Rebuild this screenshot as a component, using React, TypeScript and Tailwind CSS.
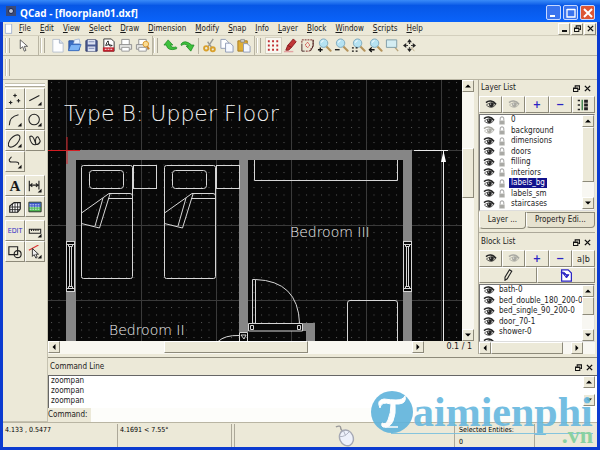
import { clsx } from "clsx";
import type { ReactNode } from "react";

const MENU = ["File", "Edit", "View", "Select", "Draw", "Dimension", "Modify", "Snap", "Info", "Layer", "Block", "Window", "Scripts", "Help"];

const LAYERS = ["0", "background", "dimensions", "doors", "filling", "interiors", "labels_bg", "labels_sm", "staircases", ""];

const BLOCKS = ["bath-0", "bed_double_180_200-0", "bed_single_90_200-0", "door_70-1", "shower-0", ""];

const RAISED = "border border-t-white border-l-white border-r-[#8d8a7a] border-b-[#8d8a7a]";

function Icon({ children, className = "size-[15px]" }: { children: ReactNode; className?: string }) {
  return (
    <svg viewBox="0 0 16 16" fill="none" stroke="#222" className={clsx("shrink-0", className)} aria-hidden="true">
      {children}
    </svg>
  );
}

function Eye({ off = false }: { off?: boolean }) {
  const color = off ? "#a9a9a2" : "#252525";
  return (
    <svg viewBox="0 0 12 9" className="w-3 h-[9px] shrink-0" fill="none" stroke={color} aria-hidden="true">
      <path d="M1 2.6C3.5.2 8 .2 11 4.2" strokeWidth="1.5" />
      <path d="M1.5 5C4 2.6 8 2.4 10.6 4.6 8.5 7.8 4.5 8.3 1.5 5Z" strokeWidth=".8" />
      <circle cx="6.4" cy="4.8" r="2.4" fill={color} stroke="none" />
      <circle cx="5.6" cy="4" r=".6" fill="#fff" stroke="none" />
    </svg>
  );
}

function Lock() {
  return (
    <svg viewBox="0 0 8 10" className="w-2 h-[9px] shrink-0" aria-hidden="true">
      <path d="M2 5V3a2 2 0 0 1 4 0v2" fill="none" stroke="#aaa" strokeWidth="1.2" />
      <path d="M1 5h6v4.5H1z" fill="#b5b5b0" />
      <path d="M2 6.5h4M2 8h4" stroke="#8d8d88" strokeWidth=".5" />
    </svg>
  );
}

function Zoom({ children }: { children?: ReactNode }) {
  return (
    <Icon>
      <path d="M10 9l4.5 4.5" stroke="#b5945c" strokeWidth="2.2" strokeLinecap="round" />
      <circle cx="7" cy="5.5" r="4.5" fill="#b5e2f2" stroke="#7fa9bd" />
      <path d="M4.5 5Q5 3 7 2.8" stroke="#fff" />
      <g stroke="#111" strokeWidth="1.4">{children}</g>
    </Icon>
  );
}

const FILE_ICONS = [
  {
    name: "New",
    icon: (
      <Icon>
        <path d="M3 1.5h7l4 4v9.500H3z" fill="#fdfeff" stroke="#b8c1ce" />
        <path d="M10 1.500v4h4" fill="#dbe4f0" stroke="#a8b3c4" />
      </Icon>
    ),
  },
  {
    name: "Open",
    icon: (
      <Icon>
        <path d="M2 13V3h5l1 2h5v8z" fill="#3d6fc4" stroke="#2a4f97" />
        <path d="M8 2l5-1 1 5H7z" fill="#e8f2ff" stroke="#87a3cf" strokeWidth=".6" />
        <path d="M1.500 13.500L4 7h11l-2.500 6.500z" fill="#7db4f5" stroke="#2f60b5" strokeWidth=".8" />
      </Icon>
    ),
  },
  {
    name: "Save",
    icon: (
      <Icon>
        <path d="M3 2h10l1 1v11H2V3z" fill="#4c5c94" stroke="#303b66" />
        <path d="M4 2h8v5H4zM4 9h8v5H4z" fill="#dce2f2" stroke="none" />
        <path d="M5 4h6M5 11h6" stroke="#7b88b5" />
      </Icon>
    ),
  },
  {
    name: "Export PDF",
    icon: (
      <Icon>
        <path d="M3 1h8l3 3v10H3z" fill="#fff" stroke="#333" />
        <path d="M5 8Q8 0 8 5T12 8Q8 6 5 8" stroke="#222" />
        <path d="M2 10h12v4.500H2z" fill="#c3202b" stroke="none" />
        <path d="M4 12h8" stroke="#fff" strokeDasharray="2 1" />
      </Icon>
    ),
  },
  {
    name: "Print",
    icon: (
      <Icon>
        <path d="M4 7V1.500h8V7" fill="#fff" stroke="#8d8d8d" />
        <path d="M1.500 7h13v5h-13z" fill="#e4e4e2" stroke="#909090" />
        <path d="M4 10h8v4H4z" fill="#fff" stroke="#999" />
      </Icon>
    ),
  },
  {
    name: "Print preview",
    icon: (
      <Icon>
        <path d="M4 7V1.500h8V7" fill="#fff" stroke="#8d8d8d" />
        <path d="M1.500 7h12v5h-12z" fill="#e4e4e2" stroke="#909090" />
        <path d="M4 10h8v4H4z" fill="#fff" stroke="#999" />
        <circle cx="11.500" cy="6.500" r="3" fill="#fbdc91" stroke="#d9962e" />
        <path d="M13 9l2 3" stroke="#c9812a" strokeWidth="2" />
      </Icon>
    ),
  },
];

const UNDO_ICONS = [
  {
    name: "Undo",
    icon: (
      <Icon>
        <path d="M5.500 2L1 7.500h2.500Q5 14.500 14.500 11.500 15 10 14 9.500 9 11 8 7.500h2.500z" fill="#3fc13c" stroke="#1d8a24" strokeWidth=".8" />
      </Icon>
    ),
  },
  {
    name: "Redo",
    icon: (
      <Icon>
        <path d="M1 6.500Q5 1 12.500 7.500H15L11.500 14 6.500 8.500H9Q5 5 1.500 8z" fill="#3fc13c" stroke="#1d8a24" strokeWidth=".8" />
      </Icon>
    ),
  },
];

const CLIP_ICONS = [
  {
    name: "Cut",
    icon: (
      <Icon>
        <path d="M12 1L6 10M6 4l5 7" stroke="#9a9a94" strokeWidth="1.500" />
        <circle cx="4.500" cy="11" r="2.300" stroke="#d9a02c" strokeWidth="2" />
        <circle cx="11.500" cy="12" r="2.200" stroke="#d9a02c" strokeWidth="2" />
      </Icon>
    ),
  },
  {
    name: "Copy",
    icon: (
      <Icon>
        <path d="M2 1.500h5l3 3V11H2z" fill="#fff" stroke="#8f9bb5" />
        <path d="M7 5.500h5l3 3V15H7z" fill="#f6f9ff" stroke="#8f9bb5" />
      </Icon>
    ),
  },
  {
    name: "Paste",
    icon: (
      <Icon>
        <path d="M2 3h10v11H2z" fill="#dfae37" stroke="#a77b21" />
        <path d="M5 1.500h4v3H5z" fill="#ccc" stroke="#777" strokeWidth=".6" />
        <path d="M8 6h4l3 3v6H8z" fill="#f6f9ff" stroke="#8f9bb5" />
      </Icon>
    ),
  },
];

const VIEW_ICONS = [
  {
    name: "Grid",
    icon: (
      <Icon>
        <path d="M2 3.500h12M2 8h12M2 12.500h12" stroke="#c02a2f" strokeWidth="2" strokeDasharray="2 2.500" />
      </Icon>
    ),
  },
  {
    name: "Draft mode",
    icon: (
      <Icon>
        <path d="M11 1l3 3-5 6-4-2z" fill="#c03636" stroke="#8c1b20" />
        <path d="M5 8l4 2-3 3H3z" fill="#b33" stroke="#8c1b20" />
        <path d="M1 14.500h10" stroke="#e3a3a3" strokeWidth="1.500" />
      </Icon>
    ),
  },
  {
    name: "Redraw",
    icon: (
      <Icon>
        <path d="M2 5V2h12v6l-4 6H6" stroke="#722" strokeDasharray="2 1" />
        <path d="M2 6v8h3M14 2v7l-3 5" stroke="#422" />
        <path d="M8 4.500l2.500 3L8 10.500 5.500 7.500z" stroke="#c33" strokeDasharray="2 1" />
      </Icon>
    ),
  },
  { name: "Zoom in", icon: <Zoom><path d="M1 12.500h5M3.500 10v5" /></Zoom> },
  { name: "Zoom out", icon: <Zoom><path d="M1 12.500h5" /></Zoom> },
  { name: "Auto zoom", icon: <Zoom><path d="M1 10.500h6M1 14h6" strokeDasharray="2 2" /></Zoom> },
  { name: "Previous view", icon: <Zoom><path d="M2 12.500h5M4 10l-2.500 2.500L4 15" /></Zoom> },
  {
    name: "Window zoom",
    icon: (
      <Icon>
        <path d="M9 8l5 6" stroke="#b9a67d" strokeWidth="1.500" />
        <path d="M1.500 2h11v8h-11z" fill="#d4edf2" stroke="#7e9ca6" />
      </Icon>
    ),
  },
  {
    name: "Pan",
    icon: (
      <Icon className="size-[13px]">
        <path d="M8 0l3 4H5zM8 16l3-4H5zM0 8l4-3v6zM16 8l-4-3v6z" fill="#222" stroke="none" />
        <path d="M8 4v2M8 10v2M4 8h2M10 8h2" strokeWidth="1.500" />
        <path d="M10 10l4 5" stroke="#b9a67d" />
      </Icon>
    ),
  },
];

const CORNER = <path d="M11 15.500h4.500V11z" fill="#111" stroke="none" />;

const TOOLS = [
  [
    { name: "Point", icon: <path d="M8 2v4M6 4h4M3 10v4M1 12h4M12 8v4M10 10h4" strokeWidth="1.300" /> },
    { name: "Line", icon: <><path d="M1.500 10L13 4" strokeWidth="1.200" />{CORNER}</> },
    { name: "Arc", icon: <><path d="M1.500 14Q1.500 4 12 2" strokeWidth="1.200" />{CORNER}</> },
    { name: "Circle", icon: <><circle cx="7" cy="7.500" r="6" strokeWidth="1.200" />{CORNER}</> },
    { name: "Ellipse", icon: <><ellipse cx="7" cy="8" rx="8.500" ry="4.500" transform="rotate(-48 7 8)" strokeWidth="1.200" />{CORNER}</> },
    { name: "Spline", icon: <path d="M2 3Q5 1 7 6T9 12Q6 13 4 10T2 3zM9 12Q8 8 9 5 11 2 12 4T14 8Q13 12 9 12z" strokeWidth="1.200" /> },
    { name: "Polyline", icon: <><path d="M4 2L1.500 5Q1 8 4 8H9Q13 8 12 11" strokeWidth="1.200" />{CORNER}</> },
  ],
  [
    { name: "Text", icon: null },
    { name: "Dimension", icon: <><path d="M1.500 2v12M12.500 2v10M2 7h10M5 5L2.500 7 5 9M9 5l2.500 2L9 9" strokeWidth="1.300" />{CORNER}</> },
    {
      name: "Hatch",
      icon: (
        <>
          <path d="M2 14V7L7 3h7v7l-3 4z" strokeWidth="1.400" fill="#fff" />
          <path d="M2 8h12M2 11h12M5 4v10M8 3v11M11 3v11" />
        </>
      ),
    },
    {
      name: "Image",
      icon: (
        <>
          <path d="M1 2.500h14v11H1z" fill="#4fb852" />
          <path d="M1.500 3h13v5h-13z" fill="#3f55c8" stroke="none" />
          <path d="M2 5.500h12M2 8h12M2 10.500h12" stroke="#e8f4ff" strokeDasharray="2 1" />
        </>
      ),
    },
  ],
  [
    { name: "Edit", icon: null },
    { name: "Measure", icon: <><path d="M1.500 6h13v4.500h-13zM4 6v2M6.500 6v2M9 6v2M11.500 6v2" strokeWidth="1.200" />{CORNER}</> },
    { name: "Block", icon: <><path d="M1 2h10v9H1z" strokeWidth="1.300" /><circle cx="11" cy="10.500" r="4" strokeWidth="1.300" /></> },
    {
      name: "Select",
      icon: (
        <>
          <path d="M1 6L12 0" stroke="#d33" strokeWidth="1.300" />
          <path d="M5 4v9l2-2 2 4 1.500-1L9 10.500h3z" fill="#eee" />
          {CORNER}
        </>
      ),
    },
  ],
];

function Handle() {
  return <div className="w-1 self-stretch my-[2px] mr-1 border-x border-l-white border-r-[#aca899] shadow-[-1px_0_0_#c5c2b0]" />;
}

function ToolGroup({ items }: { items: { name: string; icon: ReactNode }[] }) {
  return (
    <div className="flex items-center">
      {items.map((e) => (
        <button key={e.name} aria-label={e.name} className={clsx("w-[17px] h-[17px] flex items-center justify-center", e.name === "Grid" && "bg-[#f8f7f1] border border-[#d5d1c0]")}>
          {e.icon}
        </button>
      ))}
    </div>
  );
}

function Arrow({ dir }: { dir: "up" | "down" | "left" | "right" }) {
  return (
    <button aria-label={`Scroll ${dir}`} className={clsx("size-3 shrink-0 bg-[#ece9d8] flex items-center justify-center", RAISED)}>
      <svg viewBox="0 0 6 6" className="size-[6px]" aria-hidden="true">
        {dir === "up" && <path d="M0 4.500h6L3 1.500z" />}
        {dir === "down" && <path d="M0 1.500h6L3 4.500z" />}
        {dir === "left" && <path d="M4.500 0v6l-3-3z" />}
        {dir === "right" && <path d="M1.500 0v6l3-3z" />}
      </svg>
    </button>
  );
}

function DockTitle({ title }: { title: string }) {
  return (
    <header className="h-4 shrink-0 flex items-center justify-between pl-[2px] pr-1">
      <h2>{title}</h2>
      <div className="flex gap-1">
        <button aria-label={`Float ${title}`}>
          <RestoreIcon />
        </button>
        <button aria-label={`Close ${title}`}>
          <CloseIcon />
        </button>
      </div>
    </header>
  );
}

function RestoreIcon() {
  return (
    <svg viewBox="0 0 8 8" className="size-[7px]" fill="none" stroke="#111" aria-hidden="true">
      <path d="M2.500 3V1h5v4H6M2.500 1h5" strokeWidth="1.200" />
      <path d="M.5 3.500h5v4h-5zM.5 4h5" strokeWidth="1.200" />
    </svg>
  );
}

function CloseIcon() {
  return (
    <svg viewBox="0 0 8 8" className="size-[7px]" stroke="#111" strokeWidth="1.600" aria-hidden="true">
      <path d="M1 1l6 6M7 1L1 7" />
    </svg>
  );
}

function Bed({ x }: { x: number }) {
  return (
    <g transform={`translate(${x} 85)`}>
      <rect x=".5" y=".5" width="51" height="113" rx="2" />
      <rect x="8.500" y="5.500" width="34" height="18" rx="3" />
      <rect x="52.500" y=".5" width="23" height="23" />
      <path d="M.5 48L28 28.500H49Q51.500 28.500 51.500 31M27 33.500h24.500M.5 58.500L18.500 63 29 29M22 33L14 61" />
    </g>
  );
}

function WallWindow({ x, y }: { x: number; y: number }) {
  return (
    <g transform={`translate(${x} ${y})`}>
      <path d="M0 0h9v51H0z" fill="#080808" stroke="none" />
      <path d="M.5 0v51M8.500 0v51M0 .5h9M0 3.500h9M0 47.500h9M0 50.500h9M3.500 5v41M5.500 5v41M2.500 3.500v2h4v-2M2.500 47.500v-2h4v2" />
    </g>
  );
}

function Drawing() {
  return (
    <svg className="flex-1 min-w-0 h-auto min-h-[200px] bg-[#080808] font-['DejaVu_Sans'] font-extralight" fill="none" role="img" aria-label="Floor plan">
      <defs>
        <pattern id="dots" x="3" y="2" width="7.500" height="7.500" patternUnits="userSpaceOnUse">
          <rect width="1" height="1" fill="#555" />
        </pattern>
        <pattern id="lines" x="18" y="70" width="75" height="75" patternUnits="userSpaceOnUse">
          <path d="M.5 0v75M0 .5h75" stroke="#3a3a3a" />
        </pattern>
      </defs>
      <rect width="100%" height="100%" fill="url(#dots)" />
      <rect width="100%" height="100%" fill="url(#lines)" />
      <path d="M18 70h346v400h-9V80H200v172h-9V80H28v390H18zM255 243h12v227h-9V251h-3z" fill="#868686" />
      <g stroke="#d6d6d6">
        <Bed x={33} />
        <Bed x={116} />
        <WallWindow x={18} y={161} />
        <WallWindow x={355} y={161} />
        <path d="M206.500 80v20.500h143V80" />
        <path d="M204.500 243V199.500h3V243M207.500 199.500Q250 201 251.500 243" />
        <path d="M200.500 243.500h54v7.500h-54zM202.500 245.500h3v4h-3zM249.500 245.500h3v4h-3z" fill="#080808" />
        <path d="M299.500 400V223q0-2.500 2.500-2.500h45q2.500 0 2.500 2.500V400" />
        <path d="M170 261.500Q177 255 191 255.500M191.500 252.500h8v30h-8zM193 255l5 0-2 4z" />
        <path d="M366 70.500h34M395.500 71v400" stroke="#e9e9e9" />
      </g>
      <path d="M395.500 71l2.500 11h-5z" fill="#fff" />
      <path d="M0 70.500h32M19 57v27" stroke="#d41c22" />
      <g fill="#f2f2f2">
        <text x="16" y="41" fontSize="22">Type B: Upper Floor</text>
        <text x="61" y="255" fontSize="14">Bedroom II</text>
        <text x="242" y="157" fontSize="14">Bedroom III</text>
      </g>
    </svg>
  );
}

function LayerList() {
  return (
    <section className="flex flex-col">
      <DockTitle title="Layer List" />
      <div className="grid grid-cols-5 h-[17px] mb-px">
        {[<Eye />, <Eye off />, "+", "−", null].map((e, i) => (
          <button key={i} aria-label={["Show all", "Hide all", "Add layer", "Remove layer", "Edit layer"][i]} className={clsx("flex items-center justify-center text-[11px] font-bold text-[#2b25c4]", RAISED)}>
            {e ?? (
              <Icon className="size-3">
                <path d="M1 2h3M1 8h3M1 14h3" strokeWidth="2" />
                <path d="M7 1v14" stroke="#4a8a55" strokeWidth="2" />
                <path d="M12 1v14" strokeWidth="5" strokeDasharray="4 1" />
              </Icon>
            )}
          </button>
        ))}
      </div>
      <div className="flex h-[97px] overflow-hidden bg-white border border-t-[#777] border-l-[#777] border-[#ddd]">
        <ul className="grid auto-rows-fr h-[105px] flex-1 min-w-0 pl-[3px]">
          {LAYERS.map((e) => (
            <li key={e} className="flex items-center gap-[3px] leading-[10px]">
              <Eye off={e === "background"} />
              <Lock />
              <span className={clsx("px-[2px]", e === "labels_bg" && "bg-[#12128c] text-white")}>{e}</span>
            </li>
          ))}
        </ul>
        <div className="flex flex-col justify-between bg-[#f8f7f2] pb-px">
          <Arrow dir="up" />
          <div className={clsx("h-[55px] bg-[#ece9d8] mb-auto", RAISED)} />
          <Arrow dir="down" />
        </div>
      </div>
      <div className="flex items-start pt-px">
        <button className="h-[17px] flex-2 whitespace-nowrap border border-t-0 border-l-white border-[#8d8a7a] rounded-b-sm">Layer ...</button>
        <button className="h-4 flex-3 whitespace-nowrap border border-[#8d8a7a] border-l-white bg-[#e6e2cf] rounded-b-sm">Property Edi...</button>
      </div>
    </section>
  );
}

function BlockList() {
  return (
    <section className="flex flex-col flex-1 border-t border-[#aca899] mt-[3px] pt-px">
      <DockTitle title="Block List" />
      <div className="grid grid-cols-5 h-[17px]">
        {[<Eye />, <Eye off />, "+", "−", "a|b"].map((e, i) => (
          <button key={i} aria-label={["Show blocks", "Hide blocks", "Add block", "Remove block", "Rename block"][i]} className={clsx("flex items-center justify-center", RAISED, i < 4 ? "text-[11px] font-bold text-[#2b25c4]" : "text-[9px]")}>
            {e}
          </button>
        ))}
      </div>
      <div className="grid grid-cols-2 h-4 mb-px">
        <button aria-label="Edit block" className={clsx("flex items-center justify-center", RAISED)}>
          <Icon className="size-3">
            <path d="M10 1l3 2-6 10-3 2V11z" strokeWidth="1.500" />
          </Icon>
        </button>
        <button aria-label="Insert block" className={clsx("flex items-center justify-center", RAISED)}>
          <Icon className="size-[13px]">
            <path d="M2 1h8l4 4v10H2z" fill="#fff" stroke="#2b25c4" strokeWidth="1.500" />
            <path d="M1 4q7-1 7 6M5 7l3 4 3-4z" fill="#2b25c4" stroke="#2b25c4" strokeWidth="1.200" />
          </Icon>
        </button>
      </div>
      <div className="flex h-[58px] overflow-hidden bg-white border border-t-[#777] border-l-[#777] border-[#ddd]">
        <ul className="grid auto-rows-fr h-[63px] flex-1 min-w-0 pl-[3px]">
          {BLOCKS.map((e) => (
            <li key={e} className="flex items-center gap-1 leading-[10px] overflow-hidden whitespace-nowrap">
              <Eye />
              <span>{e}</span>
            </li>
          ))}
        </ul>
        <div className="flex flex-col justify-between bg-[#f8f7f2]">
          <Arrow dir="up" />
          <div className={clsx("h-[18px] bg-[#ece9d8] mb-auto", RAISED)} />
          <Arrow dir="down" />
        </div>
      </div>
      <div className="flex bg-[#f8f7f2] pr-3">
        <Arrow dir="left" />
        <div className={clsx("w-[72px] mr-auto bg-[#ece9d8]", RAISED)} />
        <Arrow dir="right" />
      </div>
    </section>
  );
}

function CommandLine() {
  return (
    <section className="flex flex-col border-t border-[#8d8a7a] pt-px">
      <DockTitle title="Command Line" />
      <div className="flex h-[33px] bg-white border-t border-l border-[#666] pr-[2px]">
        <div className="flex-1 flex flex-col justify-end leading-[10px] pl-[2px] pb-[2px] overflow-hidden">
          <p>zoompan</p>
          <p>zoompan</p>
          <p>zoompan</p>
        </div>
        <div className="flex flex-col justify-between pb-[2px]">
          <Arrow dir="up" />
          <Arrow dir="down" />
        </div>
      </div>
      <label className="flex items-center h-[14px]">
        <span className="w-[43px]">Command:</span>
        <input className="flex-1 min-w-0 h-full bg-[#fdfdfa] outline-none" />
      </label>
    </section>
  );
}

function Watermark() {
  return (
    <div className="absolute right-1 bottom-0 w-[222px] h-[56px] pointer-events-none font-['Liberation_Serif'] opacity-90">
      <div className="flex items-start">
        <svg viewBox="0 0 42 42" className="size-[42px] shrink-0" aria-hidden="true">
          <circle cx="21" cy="21" r="21" fill="#5fb3dc" />
          <path d="M9 17Q5 9 13 8Q20 9 25 9Q32 9 34 5Q36 12 28 13L24 13Q25 23 22 30Q19 37 12 36Q10 35 11 32Q15 34 17 29Q20 22 20 13Q10 10 9 17z" fill="#fff" stroke="#fff" strokeLinejoin="round" />
          <path d="M14 36h13" stroke="#fff" strokeWidth="1.500" />
        </svg>
        <span className="text-[42px] leading-[42px] font-bold text-[#66b8df]">aimienphi</span>
      </div>
      <div className="absolute left-5 right-0 top-[42px] border-t border-[#7ac0de]" />
      <span className="absolute right-0 top-[32px] text-[24px] leading-6 font-bold text-[#80cf9c]">.vn</span>
    </div>
  );
}

export default function App() {
  return (
    <div className="relative min-h-screen flex flex-col bg-[#ece9d8] border-x-3 border-b-3 border-[#0b3bd0] text-[8px] leading-[10px] text-[#1a1a1a] font-['DejaVu_Sans_Condensed','DejaVu_Sans',sans-serif]">
      <header className="-mx-[3px] h-[22px] flex items-center gap-1 pl-[6px] pr-[5px] bg-linear-to-b from-[#3a8bf8] via-[#0757e6] via-25% to-[#0a63fa] text-white">
        <svg viewBox="0 0 10 10" className="size-[10px]" aria-hidden="true">
          <path d="M0 0h10v10H0z" fill="#3b4a78" />
          <circle cx="5" cy="5" r="2.500" fill="#b9c3da" stroke="#18224a" />
        </svg>
        <h1 className="text-[10px] font-['Open_Sans',sans-serif] font-bold flex-1 pt-[3px]">QCad - [floorplan01.dxf]</h1>
        <div className="flex gap-[2px] pt-[3px]">
          {["Minimize", "Maximize", "Close"].map((e) => (
            <button key={e} aria-label={e} className={clsx("size-[15px] rounded-[2px] border border-[#c9d9ff] flex items-center justify-center", e === "Close" ? "bg-[#dd5634]" : "bg-[#3a74ee]")}>
              <svg viewBox="0 0 10 10" className="size-[10px]" fill="none" stroke="#fff" strokeWidth="2" aria-hidden="true">
                {e === "Minimize" && <path d="M1 8h5" />}
                {e === "Maximize" && <path d="M1 1.500h8M1 1v8h8V1" strokeWidth="1.300" />}
                {e === "Close" && <path d="M1 1l8 8M9 1L1 9" />}
              </svg>
            </button>
          ))}
        </div>
      </header>

      <nav className="h-[14px] flex items-center gap-px border-b border-[#d3cfbd]">
        <Icon className="w-[11px] h-[10px]">
          <path d="M3 0h10v15H3z" fill="#fff" stroke="#7d97c5" />
        </Icon>
        {MENU.map((e) => (
          <button key={e} className="px-1">
            <span className="underline">{e[0]}</span>
            {e.slice(1)}
          </button>
        ))}
        <div className="ml-auto flex h-3 gap-px pr-px">
          <button aria-label="Minimize drawing" className={clsx("w-3 flex items-end justify-center pb-[2px]", RAISED)}>
            <span className="w-[5px] h-[2px] bg-[#111]" />
          </button>
          <button aria-label="Restore drawing" className={clsx("w-3 flex items-center justify-center", RAISED)}>
            <RestoreIcon />
          </button>
          <button aria-label="Close drawing" className={clsx("w-3 flex items-center justify-center", RAISED)}>
            <CloseIcon />
          </button>
        </div>
      </nav>

      <div className="h-5 flex items-center pl-[3px] border-b border-[#b9b5a3]">
        <Handle />
        <button aria-label="Pointer" className="w-[22px] flex">
          <Icon className="size-[13px] ml-[3px]">
            <path d="M4 1v11l3-2.500L9 15l2-1-2-5h4z" fill="#fff" stroke="#444" />
          </Icon>
        </button>
        <div className="w-px self-stretch bg-[#b9b5a3] mx-[2px]" />
        <Handle />
        <ToolGroup items={FILE_ICONS} />
        <div className="w-px self-stretch bg-[#b9b5a3] mx-px" />
        <Handle />
        <ToolGroup items={UNDO_ICONS} />
        <div className="w-px h-4 bg-[#b9b5a3] mx-[2px]" />
        <ToolGroup items={CLIP_ICONS} />
        <div className="w-px self-stretch bg-[#b9b5a3] mx-[2px]" />
        <Handle />
        <ToolGroup items={VIEW_ICONS} />
      </div>
      <div className="h-6 flex pl-[3px] py-px border-b border-[#b9b5a3]">
        <Handle />
      </div>

      <div className="flex flex-1">
        <aside className="w-[45px] shrink-0 border-r border-b border-[#c5c2b0] px-[2px] pt-[3px]">
          <div className="h-1 mb-px border-y border-t-[#c5c2b0] border-b-[#aca899] bg-white" />
          <div className="flex flex-col gap-[3px]">
            {TOOLS.map((group, i) => (
              <div key={i} className="grid grid-cols-2">
                {group.map((e) => (
                  <button key={e.name} aria-label={e.name} className={clsx("h-[21px] flex items-center justify-center", RAISED)}>
                    {e.name === "Text" && <span className="text-[15px] font-bold font-['Liberation_Serif']">A</span>}
                    {e.name === "Edit" && <span className="text-[7px] text-[#2f29c4]">EDIT</span>}
                    {e.icon && <Icon className="size-[14px]">{e.icon}</Icon>}
                  </button>
                ))}
              </div>
            ))}
          </div>
        </aside>

        <div className="flex-1 min-w-0 flex flex-col">
          <div className="flex flex-1 pb-[3px]">
            <main className="flex-1 min-w-0 flex flex-col">
              <div className="flex flex-1">
                <Drawing />
                <div className="w-3 flex flex-col bg-[#f8f7f0]">
                  <Arrow dir="up" />
                  <div className={clsx("h-[50px] mt-14 mb-auto bg-[#ece9d8]", RAISED)} />
                  <Arrow dir="down" />
                </div>
              </div>
              <div className="flex h-[13px] bg-[#f8f7f0]">
                <Arrow dir="left" />
                <div className="flex-1" />
                <div className={clsx("w-36 h-3 bg-[#ece9d8]", RAISED)} />
                <div className="flex-1" />
                <Arrow dir="right" />
                <span className="w-[50px] shrink-0 bg-[#ece9d8] text-right font-['DejaVu_Sans'] pr-[2px] pt-px">0.1 / 1</span>
              </div>
            </main>
            <aside className="w-[119px] shrink-0 ml-1 border-l border-[#aca899] pr-[2px] flex flex-col">
              <LayerList />
              <BlockList />
            </aside>
          </div>
          <CommandLine />
        </div>
      </div>

      <footer className="h-[25px] shrink-0 flex text-[7px] leading-3 text-black border-t border-[#b9b5a3] pt-px">
        <p className="w-[115px] pl-[2px] border-r border-[#aca899]">4.133 , 0.5477</p>
        <p className="w-[114px] pl-[2px] border-r border-[#aca899]">4.1691 &lt; 7.55°</p>
        <div className="flex-1 ml-[2px] border-x border-[#aca899] flex justify-center items-center">
          <svg viewBox="0 0 24 24" className="size-[23px]" fill="none" aria-hidden="true">
            <path d="M12 8Q8 7 8 4T3 3" stroke="#999" strokeWidth="1.500" />
            <ellipse cx="14" cy="14.500" rx="7" ry="8.500" transform="rotate(-25 14 14.500)" fill="#eef1fb" stroke="#a5a8b4" strokeWidth="1.500" />
            <path d="M7 13Q12 14 17 8M11 7l2 5" stroke="#aeb2c0" />
          </svg>
        </div>
        <div className="w-[78px] ml-[2px] pl-[2px] border-r border-[#aca899]">
          <p>Selected Entities:</p>
          <p>0</p>
        </div>
        <div className="w-[62px]" />
      </footer>
      <Watermark />
    </div>
  );
}
